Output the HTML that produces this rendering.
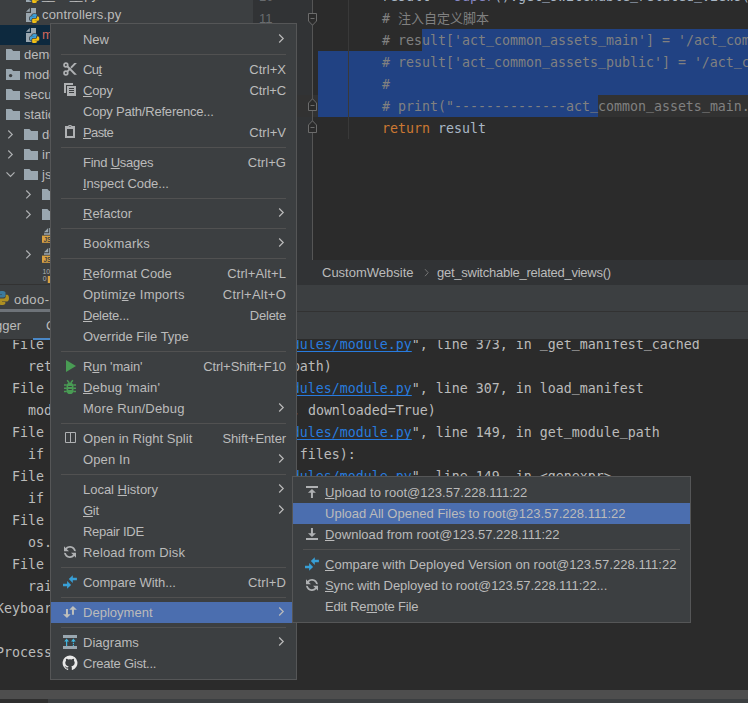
<!DOCTYPE html>
<html><head><meta charset="utf-8"><title>PyCharm</title>
<style>
html,body{margin:0;padding:0}
body{width:748px;height:703px;overflow:hidden;position:relative;background:#2b2b2b;font-family:"Liberation Sans","Noto Sans CJK SC",sans-serif;font-size:13px;color:#bbbbbb}
#root{position:absolute;left:0;top:0;width:748px;height:703px;overflow:hidden}
.abs{position:absolute}
/* tree */
#tree{position:absolute;left:0;top:0;width:253px;height:284px;background:#3c3f41;overflow:hidden}
.tr{position:absolute;left:0;width:253px;height:20px}
.tr.sel{background:#0d293e}
.ti{position:absolute;top:2px}
.tt{position:absolute;top:0;line-height:20px;white-space:nowrap;color:#bbbbbb;font-size:13px}
.tr.red .tt{color:#d1675a}
/* editor */
#gutter{position:absolute;left:253px;top:0;width:59px;height:260px;background:#313335}
#foldline{position:absolute;left:312px;top:0;width:1px;height:260px;background:#555555}
#editor{position:absolute;left:313px;top:0;width:435px;height:260px;background:#2b2b2b;overflow:hidden}
.selr{position:absolute;background:#214283}
.ln{position:absolute;left:382px;height:22px;line-height:22px;white-space:pre;font-family:"DejaVu Sans Mono","Liberation Mono","Noto Sans CJK SC",monospace;font-size:13.29px}
.ln .c{color:#808080} .ln .w{color:#a9b7c6} .ln .k{color:#cc7832} .ln .bi{color:#8888c6}
.ln .zh{font-family:"Liberation Sans","Noto Sans CJK SC",sans-serif;font-size:13px}
.lnum{position:absolute;color:#686b6e;font-size:13px;line-height:22px;font-family:"Liberation Sans",sans-serif}
.fold{position:absolute;left:307px}
#guide{position:absolute;left:348px;top:0;width:1px;height:139px;background:#393939}
#crumbs{position:absolute;left:253px;top:260px;width:495px;height:25px;background:#313335}
#crumbs span{position:absolute;top:0;line-height:25px;font-size:13px;color:#bbbbbb;white-space:nowrap}
/* debug panel */
#dbg{position:absolute;left:0;top:285px;width:748px;height:54px;background:#3c3f41}
#dbgline{position:absolute;left:0;top:311px;width:748px;height:1px;background:#323232}
#treeline{position:absolute;left:0;top:284px;width:748px;height:1px;background:#323232}
/* console */
#console{position:absolute;left:0;top:340px;width:748px;height:350px;background:#2b2b2b;overflow:hidden}
.cl{position:absolute;left:-4px;height:22px;line-height:22px;white-space:pre;font-family:"DejaVu Sans Mono","Liberation Mono",monospace;font-size:13.29px;color:#bbbbbb}
.cl a{color:#287bde;text-decoration:underline;text-decoration-skip-ink:none;text-underline-offset:2px;text-decoration-thickness:1px}
.cl i,.ln i{font-style:normal;position:relative;top:-2px}
/* menus */
.menu{position:absolute;background:#3c3f41;border:1px solid #555657;box-sizing:border-box;padding:5px 0 5px 0}
.mi{position:relative;height:21px;line-height:21px;white-space:nowrap}
.mi.sel{background:#4b6eaf}
.mi .ic{position:absolute;left:11px;top:2px}
.mi .lb{position:absolute;left:32px;top:0;color:#bbbbbb}
.mi .sc{position:absolute;right:10px;top:0;color:#bbbbbb}
.mi .chev{position:absolute;right:11px;top:4px}
.mi u{text-decoration:underline;text-underline-offset:1px;text-decoration-thickness:1px}
.sep{height:1px;margin:4px 10px 4px 10px;background:#515151}
</style></head><body><div id="root">

<div id="tree">
<div class="tr " style="top:-15px"><svg class="ti" style="left:25px" width="16" height="16" viewBox="0 0 16 16"><path d="M1 4.700 L4.800 1 V4.700z" fill="#9aa7b0"/><path d="M6 1h5v7H8v7H1V6h5z" fill="#9aa7b0"/><g transform="translate(4.100,6.350) scale(0.675,0.645)" stroke="#3c3f41" stroke-width="2.200" paint-order="stroke"><path d="M7.900 1c-3.400 0-3.200 1.500-3.200 1.500v1.600h3.300v.5H3.400S1 4.300 1 7.800s2 3.400 2 3.400h1.300V9.500s-.1-2 2-2h3.300s1.900 0 1.900-1.900V2.800S11.800 1 7.900 1z" fill="#3c9ed6"/><path d="M8.100 15c3.400 0 3.200-1.500 3.200-1.500v-1.600H8v-.5h4.600s2.400.3 2.400-3.200-2-3.400-2-3.400h-1.300v1.700s.1 2-2 2H6.400s-1.900 0-1.900 1.900v2.800S4.200 15 8.100 15z" fill="#f2c012"/></g></svg><span class="tt" style="left:42px"><span style="letter-spacing:-1.700px">__</span>init<span style="letter-spacing:-1.700px">__</span>.py</span></div>
<div class="tr " style="top:5px"><svg class="ti" style="left:25px" width="16" height="16" viewBox="0 0 16 16"><path d="M1 4.700 L4.800 1 V4.700z" fill="#9aa7b0"/><path d="M6 1h5v7H8v7H1V6h5z" fill="#9aa7b0"/><g transform="translate(4.100,6.350) scale(0.675,0.645)" stroke="#3c3f41" stroke-width="2.200" paint-order="stroke"><path d="M7.900 1c-3.400 0-3.200 1.500-3.200 1.500v1.600h3.300v.5H3.400S1 4.300 1 7.800s2 3.400 2 3.400h1.300V9.500s-.1-2 2-2h3.300s1.900 0 1.900-1.900V2.800S11.800 1 7.900 1z" fill="#3c9ed6"/><path d="M8.100 15c3.400 0 3.200-1.500 3.200-1.500v-1.600H8v-.5h4.600s2.400.3 2.400-3.200-2-3.400-2-3.400h-1.300v1.700s.1 2-2 2H6.400s-1.900 0-1.900 1.900v2.800S4.200 15 8.100 15z" fill="#f2c012"/></g></svg><span class="tt" style="left:42px;letter-spacing:0.140px">controllers.py</span></div>
<div class="tr red sel" style="top:25px"><svg class="ti" style="left:25px" width="16" height="16" viewBox="0 0 16 16"><path d="M1 4.700 L4.800 1 V4.700z" fill="#9aa7b0"/><path d="M6 1h5v7H8v7H1V6h5z" fill="#9aa7b0"/><g transform="translate(4.100,6.350) scale(0.675,0.645)" stroke="#3c3f41" stroke-width="2.200" paint-order="stroke"><path d="M7.900 1c-3.400 0-3.200 1.500-3.200 1.500v1.600h3.300v.5H3.400S1 4.300 1 7.800s2 3.400 2 3.400h1.300V9.500s-.1-2 2-2h3.300s1.900 0 1.900-1.900V2.800S11.800 1 7.900 1z" fill="#3c9ed6"/><path d="M8.100 15c3.400 0 3.200-1.500 3.200-1.500v-1.600H8v-.5h4.600s2.400.3 2.400-3.200-2-3.400-2-3.400h-1.300v1.700s.1 2-2 2H6.400s-1.900 0-1.900 1.900v2.800S4.200 15 8.100 15z" fill="#f2c012"/></g></svg><span class="tt" style="left:42px">main.py</span></div>
<div class="tr " style="top:45px"><svg class="ti" style="left:5px" width="16" height="16" viewBox="0 0 16 16"><path d="M1 2h5.400l1.800 2H15V13H1z" fill="#9aa7b0"/></svg><span class="tt" style="left:24px">demo</span></div>
<div class="tr " style="top:65px"><svg class="ti" style="left:5px" width="16" height="16" viewBox="0 0 16 16"><path d="M1 2h5.400l1.800 2H15V13H1z" fill="#9aa7b0"/><circle cx="5.600" cy="8.600" r="1.700" fill="#3c3f41"/></svg><span class="tt" style="left:24px">models</span></div>
<div class="tr " style="top:85px"><svg class="ti" style="left:5px" width="16" height="16" viewBox="0 0 16 16"><path d="M1 2h5.400l1.800 2H15V13H1z" fill="#9aa7b0"/></svg><span class="tt" style="left:24px">security</span></div>
<div class="tr " style="top:105px"><svg class="ti" style="left:5px" width="16" height="16" viewBox="0 0 16 16"><path d="M1 2h5.400l1.800 2H15V13H1z" fill="#9aa7b0"/></svg><span class="tt" style="left:24px">static</span></div>
<div class="tr " style="top:125px"><svg class="ti" style="left:2px" width="16" height="16" viewBox="0 0 16 16"><path d="M6.300 3.500 L10.200 7.450 L6.300 11.400" fill="none" stroke="#afb1b3" stroke-width="1.200"/></svg><svg class="ti" style="left:23px" width="16" height="16" viewBox="0 0 16 16"><path d="M1 2h5.400l1.800 2H15V13H1z" fill="#9aa7b0"/></svg><span class="tt" style="left:42px">description</span></div>
<div class="tr " style="top:145px"><svg class="ti" style="left:2px" width="16" height="16" viewBox="0 0 16 16"><path d="M6.300 3.500 L10.200 7.450 L6.300 11.400" fill="none" stroke="#afb1b3" stroke-width="1.200"/></svg><svg class="ti" style="left:23px" width="16" height="16" viewBox="0 0 16 16"><path d="M1 2h5.400l1.800 2H15V13H1z" fill="#9aa7b0"/></svg><span class="tt" style="left:42px">inc</span></div>
<div class="tr " style="top:165px"><svg class="ti" style="left:2px" width="16" height="16" viewBox="0 0 16 16"><path d="M4.500 5.300 L8.500 9.300 L12.500 5.300" fill="none" stroke="#afb1b3" stroke-width="1.200"/></svg><svg class="ti" style="left:23px" width="16" height="16" viewBox="0 0 16 16"><path d="M1 2h5.400l1.800 2H15V13H1z" fill="#9aa7b0"/></svg><span class="tt" style="left:42px">js</span></div>
<div class="tr " style="top:185px"><svg class="ti" style="left:20px" width="16" height="16" viewBox="0 0 16 16"><path d="M6.300 3.500 L10.200 7.450 L6.300 11.400" fill="none" stroke="#afb1b3" stroke-width="1.200"/></svg><svg class="ti" style="left:41px" width="16" height="16" viewBox="0 0 16 16"><path d="M1 2h5.400l1.800 2H15V13H1z" fill="#9aa7b0"/></svg><span class="tt" style="left:62px">lib</span></div>
<div class="tr " style="top:205px"><svg class="ti" style="left:20px" width="16" height="16" viewBox="0 0 16 16"><path d="M6.300 3.500 L10.200 7.450 L6.300 11.400" fill="none" stroke="#afb1b3" stroke-width="1.200"/></svg><svg class="ti" style="left:41px" width="16" height="16" viewBox="0 0 16 16"><path d="M1 2h5.400l1.800 2H15V13H1z" fill="#9aa7b0"/></svg><span class="tt" style="left:62px">src</span></div>
<div class="tr " style="top:225px"><svg class="ti" style="left:41px" width="16" height="16" viewBox="0 0 16 16"><path d="M3 5.200 L7.200 1 V5.200z" fill="#9aa7b0"/><path d="M8.200 1H13V7.800H3V6.200H8.200z" fill="#9aa7b0"/><path d="M1 8.600h15v7.200H1z" fill="#d9a343"/><text x="2.400" y="14.600" font-family="Liberation Sans" font-weight="bold" font-size="6.500" fill="#3c3f41">JS</text></svg><span class="tt" style="left:62px">a.js</span></div>
<div class="tr " style="top:245px"><svg class="ti" style="left:20px" width="16" height="16" viewBox="0 0 16 16"><path d="M6.300 3.500 L10.200 7.450 L6.300 11.400" fill="none" stroke="#afb1b3" stroke-width="1.200"/></svg><svg class="ti" style="left:41px" width="16" height="16" viewBox="0 0 16 16"><path d="M3 5.200 L7.200 1 V5.200z" fill="#9aa7b0"/><path d="M8.200 1H13V7.800H3V6.200H8.200z" fill="#9aa7b0"/><path d="M1 8.600h15v7.200H1z" fill="#d9a343"/><text x="2.400" y="14.600" font-family="Liberation Sans" font-weight="bold" font-size="6.500" fill="#3c3f41">JS</text></svg><span class="tt" style="left:62px">b.js</span></div>
<div class="tr " style="top:265px"><svg class="ti" style="left:41px" width="16" height="16" viewBox="0 0 16 16"><text x="1.600" y="6.800" font-family="Liberation Sans" font-size="6.800" fill="#afb1b3">10</text><text x="1.800" y="14.200" font-family="Liberation Sans" font-size="6.800" fill="#afb1b3">0</text><path d="M6.800 9h9v7h-9z" fill="#d9a343"/></svg><span class="tt" style="left:62px">c.map</span></div>
</div>
<div id="treeline"></div>

<div id="gutter"></div>
<div id="editor"></div>
<div class="abs" style="left:253px;top:95px;width:495px;height:22px;background:#323232"></div>
<div class="selr" style="left:422px;top:29px;width:326px;height:22px"></div>
<div class="selr" style="left:318px;top:51px;width:430px;height:44px"></div>
<div class="selr" style="left:318px;top:95px;width:280px;height:22px"></div>
<div id="foldline"></div>
<div id="guide"></div>
<div class="lnum" style="left:259px;top:-14px">10</div>
<div class="lnum" style="left:259px;top:8px">11</div>
<svg class="fold" style="top:13px" width="11" height="13" viewBox="0 0 11 13"><path d="M1.500 0.500h8v7.500l-4 4.200-4-4.200z" fill="#2b2b2b" stroke="#6c6c6c" stroke-width="1"/><path d="M3.500 5.500h4" stroke="#6c6c6c" stroke-width="1"/></svg>
<svg class="fold" style="top:98px" width="11" height="13" viewBox="0 0 11 13"><path d="M1.500 12.500h8V5l-4-4.200-4 4.200z" fill="#2b2b2b" stroke="#6c6c6c" stroke-width="1"/><path d="M3.500 7.500h4" stroke="#6c6c6c" stroke-width="1"/></svg>
<svg class="fold" style="top:120px" width="11" height="13" viewBox="0 0 11 13"><path d="M1.500 12.500h8V5l-4-4.200-4 4.200z" fill="#2b2b2b" stroke="#6c6c6c" stroke-width="1"/><path d="M3.500 7.500h4" stroke="#6c6c6c" stroke-width="1"/></svg>
<div class="ln" style="top:-14px"><span class="w">result = </span><span class="bi">super</span><span class="w">().get<i>_</i>switchable<i>_</i>related<i>_</i>views(key)</span></div>
<div class="ln" style="top:8px"><span class="c"># <span class="zh">注入自定义脚本</span></span></div>
<div class="ln" style="top:30px"><span class="c"># result['act<i>_</i>common<i>_</i>assets<i>_</i>main'] = '/act<i>_</i>common<i>_</i>assets/static/main.js'</span></div>
<div class="ln" style="top:52px"><span class="c"># result['act<i>_</i>common<i>_</i>assets<i>_</i>public'] = '/act<i>_</i>common<i>_</i>assets/static/public.js'</span></div>
<div class="ln" style="top:74px"><span class="c">#</span></div>
<div class="ln" style="top:96px"><span class="c"># print("--------------act<i>_</i>common<i>_</i>assets<i>_</i>main.js")</span></div>
<div class="ln" style="top:118px"><span class="k">return</span><span class="w"> result</span></div>
<div id="crumbs"><span style="left:69px">CustomWebsite</span><svg style="position:absolute;left:171px;top:8px" width="6" height="10" viewBox="0 0 6 10"><path d="M1 1.200 L4.200 4.700 L1 8.200" fill="none" stroke="#747474" stroke-width="1"/></svg><span style="left:184px;letter-spacing:-0.25px">get_switchable_related_views()</span></div>

<div id="dbg">
<div class="abs" style="left:0;top:26px;width:748px;height:1px;background:#323232"></div>
<span class="abs" style="left:14px;top:5px;line-height:20px;font-size:13px;letter-spacing:0.450px">odoo-15</span>
<div class="abs" style="left:0;top:24px;width:120px;height:3px;background:#6e7379"></div>
<span class="abs" style="left:-36px;top:31px;line-height:20px;font-size:13px">Debugger</span>
<span class="abs" style="left:46px;top:31px;line-height:20px;font-size:13px">Console</span>
<div class="abs" style="left:33px;top:53px;width:90px;height:2px;background:#4a88c7"></div>
</div>
<svg style="position:absolute;left:-6px;top:290px;opacity:0.62" width="16" height="16" viewBox="0 0 16 16"><path d="M7.900 1c-3.400 0-3.200 1.500-3.200 1.500v1.600h3.300v.5H3.400S1 4.300 1 7.800s2 3.400 2 3.400h1.300V9.500s-.1-2 2-2h3.300s1.900 0 1.900-1.900V2.800S11.800 1 7.900 1z" fill="#3c9ed6"/><path d="M8.100 15c3.400 0 3.200-1.500 3.200-1.500v-1.600H8v-.5h4.600s2.400.3 2.400-3.200-2-3.400-2-3.400h-1.300v1.700s.1 2-2 2H6.400s-1.900 0-1.900 1.900v2.800S4.200 15 8.100 15z" fill="#f2c012"/></svg>

<div id="console">
<div class="cl" style="top:-6px">  File "<a>work/odoo-15.0-server/odoo/modules/module.py</a>", line 373, in <i>_</i>get<i>_</i>manifest<i>_</i>cached</div>
<div class="cl" style="top:16px">    return load<i>_</i>manifest(module, mod<i>_</i>path)</div>
<div class="cl" style="top:38px">  File "<a>work/odoo-15.0-server/odoo/modules/module.py</a>", line 307, in load<i>_</i>manifest</div>
<div class="cl" style="top:60px">    mod<i>_</i>path = get<i>_</i>module<i>_</i>path(module, downloaded=True)</div>
<div class="cl" style="top:82px">  File "<a>work/odoo-15.0-server/odoo/modules/module.py</a>", line 149, in get<i>_</i>module<i>_</i>path</div>
<div class="cl" style="top:104px">    if any(os.path.exists(f) for f in files):</div>
<div class="cl" style="top:126px">  File "<a>work/odoo-15.0-server/odoo/modules/module.py</a>", line 149, in &lt;genexpr&gt;</div>
<div class="cl" style="top:148px">    if any(os.path.exists(f) for f in files):</div>
<div class="cl" style="top:170px">  File "<a>/usr/lib/python3.8/genericpath.py</a>", line 19, in exists</div>
<div class="cl" style="top:192px">    os.stat(path)</div>
<div class="cl" style="top:214px">  File "<a>/usr/lib/python3.8/signal.py</a>", line 47, in handler</div>
<div class="cl" style="top:236px">    raise KeyboardInterrupt</div>
<div class="cl" style="top:258px">KeyboardInterrupt</div>
<div class="cl" style="top:280px"></div>
<div class="cl" style="top:302px">Process finished with exit code 1</div>
</div>
<div class="abs" style="left:0;top:690px;width:748px;height:9px;background:#4e4e4e"></div>
<div class="abs" style="left:0;top:699px;width:748px;height:4px;background:#3c3f41"></div>
<div class="abs" style="left:0;top:699px;width:48px;height:4px;background:#2f2f2f"></div>

<div class="menu" style="left:50px;top:23px;width:247px">
<div class="mi"><span class="lb" style="letter-spacing:-0.108px">New</span><svg class="chev" width="7" height="11" viewBox="0 0 7 11"><path d="M1.200 1.500 L5.200 5.500 L1.200 9.500" fill="none" stroke="#bbbbbb" stroke-width="1.200"/></svg></div>
<div class="sep"></div>
<div class="mi"><svg class="ic" width="16" height="16" viewBox="0 0 16 16"><g fill="none" stroke="#afb1b3" stroke-width="1.700"><circle cx="3.900" cy="3.950" r="1.850"/><circle cx="3.900" cy="11.950" r="1.850"/></g><path d="M6.180 11.060 L14.940 2.100 H12.280 L4.820 9.730z" fill="#afb1b3"/><path d="M7.700 5.900 L10 8.250" stroke="#3c3f41" stroke-width="0.800" fill="none"/><path d="M6.180 4.840 L14.940 13.800 H12.280 L4.820 6.170z" fill="#afb1b3"/></svg><span class="lb" style="letter-spacing:-0.617px">Cu<u>t</u></span><span class="sc" style="letter-spacing:0.043px">Ctrl+X</span></div>
<div class="mi"><svg class="ic" width="16" height="16" viewBox="0 0 16 16"><path d="M2 1H11V3H4V11H2z" fill="#afb1b3"/><path d="M5 4h9v10H5z M7 6v1h5V6z M7 8v1h5V8z M7 10v1h5v-1z" fill="#afb1b3" fill-rule="evenodd"/></svg><span class="lb" style="letter-spacing:-0.153px"><u>C</u>opy</span><span class="sc" style="letter-spacing:-0.101px">Ctrl+C</span></div>
<div class="mi"><span class="lb" style="letter-spacing:-0.207px">Copy Path/Reference...</span></div>
<div class="mi"><svg class="ic" width="16" height="16" viewBox="0 0 16 16"><path d="M3 2H6.100 Q6.300 0.900 7.300 0.900 H8.700 Q9.700 0.900 9.900 2 H13 V14 H3z M5 5V12H11V5z M7.300 2.200 V2.900 H8.700 V2.200z" fill="#afb1b3" fill-rule="evenodd"/></svg><span class="lb" style="letter-spacing:-0.612px"><u>P</u>aste</span><span class="sc" style="letter-spacing:0.043px">Ctrl+V</span></div>
<div class="sep"></div>
<div class="mi"><span class="lb" style="letter-spacing:-0.248px">Find <u>U</u>sages</span><span class="sc" style="letter-spacing:0.056px">Ctrl+G</span></div>
<div class="mi"><span class="lb" style="letter-spacing:-0.118px"><u>I</u>nspect Code...</span></div>
<div class="sep"></div>
<div class="mi"><span class="lb" style="letter-spacing:-0.02px"><u>R</u>efactor</span><svg class="chev" width="7" height="11" viewBox="0 0 7 11"><path d="M1.200 1.500 L5.200 5.500 L1.200 9.500" fill="none" stroke="#bbbbbb" stroke-width="1.200"/></svg></div>
<div class="sep"></div>
<div class="mi"><span class="lb" style="letter-spacing:0.209px">Bookmarks</span><svg class="chev" width="7" height="11" viewBox="0 0 7 11"><path d="M1.200 1.500 L5.200 5.500 L1.200 9.500" fill="none" stroke="#bbbbbb" stroke-width="1.200"/></svg></div>
<div class="sep"></div>
<div class="mi"><span class="lb" style="letter-spacing:0.045px"><u>R</u>eformat Code</span><span class="sc" style="letter-spacing:0.099px">Ctrl+Alt+L</span></div>
<div class="mi"><span class="lb" style="letter-spacing:0.21px">Optimi<u>z</u>e Imports</span><span class="sc" style="letter-spacing:0.246px">Ctrl+Alt+O</span></div>
<div class="mi"><span class="lb" style="letter-spacing:-0.253px"><u>D</u>elete...</span><span class="sc" style="letter-spacing:-0.236px">Delete</span></div>
<div class="mi"><span class="lb" style="letter-spacing:-0.01px">Override File Type</span></div>
<div class="sep"></div>
<div class="mi"><svg class="ic" width="16" height="16" viewBox="0 0 16 16"><path d="M4 2 L14 8 L4 14z" fill="#499c54"/></svg><span class="lb" style="letter-spacing:-0.112px">R<u>u</u>n &#x27;main&#x27;</span><span class="sc" style="letter-spacing:-0.071px">Ctrl+Shift+F10</span></div>
<div class="mi"><svg class="ic" width="16" height="16" viewBox="0 0 16 16"><g fill="#499c54"><path d="M4.500 7.300c0-2.200 1.500-3.700 3.500-3.700s3.500 1.500 3.500 3.700v4.100c0 2.200-1.500 3.700-3.500 3.700s-3.500-1.500-3.500-3.700z M6.200 7v1.100h3.600V7z M6.200 10v1.100h3.600V10z" fill-rule="evenodd"/><path d="M2 5.300h2.800v1.400H2zM2 8.550h2.800v1.400H2zM2 11.800h2.800v1.400H2zM11.200 5.300H14v1.400h-2.800zM11.200 8.550H14v1.400h-2.800zM11.200 11.800H14v1.400h-2.800z"/></g><path d="M5.100 1.300 L7.200 3.800 M10.900 1.300 L8.800 3.800" stroke="#499c54" stroke-width="1.500" fill="none"/></svg><span class="lb" style="letter-spacing:0.176px"><u>D</u>ebug &#x27;main&#x27;</span></div>
<div class="mi"><span class="lb" style="letter-spacing:0.185px">More Run/Debug</span><svg class="chev" width="7" height="11" viewBox="0 0 7 11"><path d="M1.200 1.500 L5.200 5.500 L1.200 9.500" fill="none" stroke="#bbbbbb" stroke-width="1.200"/></svg></div>
<div class="sep"></div>
<div class="mi"><svg class="ic" width="16" height="16" viewBox="0 0 16 16"><path d="M3.500 2.500h10v10h-10z M8.500 2.500v10" fill="none" stroke="#afb1b3" stroke-width="1"/></svg><span class="lb" style="letter-spacing:0.05px">Open in Right Split</span><span class="sc" style="letter-spacing:-0.099px">Shift+Enter</span></div>
<div class="mi"><span class="lb" style="letter-spacing:0.122px">Open In</span><svg class="chev" width="7" height="11" viewBox="0 0 7 11"><path d="M1.200 1.500 L5.200 5.500 L1.200 9.500" fill="none" stroke="#bbbbbb" stroke-width="1.200"/></svg></div>
<div class="sep"></div>
<div class="mi"><span class="lb" style="letter-spacing:-0.02px">Local <u>H</u>istory</span><svg class="chev" width="7" height="11" viewBox="0 0 7 11"><path d="M1.200 1.500 L5.200 5.500 L1.200 9.500" fill="none" stroke="#bbbbbb" stroke-width="1.200"/></svg></div>
<div class="mi"><span class="lb" style="letter-spacing:-0.262px"><u>G</u>it</span><svg class="chev" width="7" height="11" viewBox="0 0 7 11"><path d="M1.200 1.500 L5.200 5.500 L1.200 9.500" fill="none" stroke="#bbbbbb" stroke-width="1.200"/></svg></div>
<div class="mi"><span class="lb" style="letter-spacing:-0.275px">Repair IDE</span></div>
<div class="mi"><svg class="ic" width="16" height="16" viewBox="0 0 16 16"><path fill="#afb1b3" fill-rule="evenodd" d="M12.575 11.885C11.474 13.182 9.832 14.004 7.999 14.004 5.039 14.004 2.580 11.862 2.088 9.043L3.948 9.108C4.434 10.890 6.064 12.200 8.000 12.200 9.301 12.200 10.465 11.608 11.235 10.679L9.050 8.712 14.043 8.450 14.305 13.443 12.575 11.885ZM3.428 4.117C4.528 2.825 6.168 2.004 7.999 2.004 10.919 2.004 13.351 4.090 13.888 6.853L12.023 6.788C11.502 5.059 9.898 3.800 8.000 3.800 6.699 3.800 5.535 4.392 4.765 5.321L6.955 7.293 1.962 7.555 1.700 2.562 3.428 4.117Z" transform="rotate(3 8.002 8.004)"/></svg><span class="lb" style="letter-spacing:0.153px">Reload from Disk</span></div>
<div class="sep"></div>
<div class="mi"><svg class="ic" width="16" height="16" viewBox="0 0 16 16"><g fill="#389fd6"><path d="M6.800 5.100 L10.800 1.200 V3.850 H14.900 V6.350 H10.800 V9z"/><path d="M9.100 10.900 L5.100 7 V9.650 H1 V12.150 H5.100 V14.800z"/></g></svg><span class="lb" style="letter-spacing:-0.073px">Compare With...</span><span class="sc" style="letter-spacing:0.139px">Ctrl+D</span></div>
<div class="sep"></div>
<div class="mi sel"><svg class="ic" width="16" height="16" viewBox="0 0 16 16"><g fill="#bfc0bc"><path d="M10.950 2 L14.900 5.700 H11.950 V10.800 H9.950 V5.700 H7.250z"/><path d="M4.970 14.050 L1 10.250 H3.970 V5 H5.970 V10.250 H8.700z"/></g></svg><span class="lb" style="letter-spacing:0.025px">Deployment</span><svg class="chev" width="7" height="11" viewBox="0 0 7 11"><path d="M1.200 1.500 L5.200 5.500 L1.200 9.500" fill="none" stroke="#bbbbbb" stroke-width="1.200"/></svg></div>
<div class="sep"></div>
<div class="mi"><svg class="ic" width="16" height="16" viewBox="0 0 16 16"><path d="M1 1h14v3H1zM1 12h14v3H1z" fill="#9aa7b0"/><g fill="#40b6e0"><path d="M4.6 4.6 L7 7.6 H5.2 V12 H4 V7.6 H2.2z"/><path d="M11.4 4.6 L13.8 7.6 H12 V8.2 H10.8 V7.6 H9z"/><path d="M10.8 9h1.2v1.2h-1.2zM10.8 10.9h1.2V12h-1.2z"/></g></svg><span class="lb" style="letter-spacing:0.025px">Diagrams</span><svg class="chev" width="7" height="11" viewBox="0 0 7 11"><path d="M1.200 1.500 L5.200 5.500 L1.200 9.500" fill="none" stroke="#bbbbbb" stroke-width="1.200"/></svg></div>
<div class="mi"><svg class="ic" width="16" height="16" viewBox="0 0 16 16"><path fill="#e8e8e8" d="M8 .6a7.4 7.4 0 0 0-2.34 14.42c.37.07.5-.16.5-.36v-1.25c-2.06.45-2.5-.99-2.5-.99-.33-.86-.82-1.08-.82-1.08-.67-.46.05-.45.05-.45.74.05 1.13.76 1.13.76.66 1.13 1.73.8 2.15.62.07-.48.26-.8.47-.99-1.64-.19-3.37-.82-3.37-3.66 0-.81.29-1.47.76-1.99-.08-.19-.33-.94.07-1.96 0 0 .62-.2 2.04.76a7.1 7.1 0 0 1 3.7 0c1.41-.96 2.03-.76 2.03-.76.4 1.02.15 1.77.07 1.96.48.52.76 1.18.76 1.99 0 2.85-1.73 3.47-3.38 3.66.27.23.5.68.5 1.37v2.03c0 .2.13.43.51.36A7.4 7.4 0 0 0 8 .6z"/></svg><span class="lb" style="letter-spacing:-0.244px">Create Gist...</span></div>
</div>

<div class="menu" style="left:292px;top:476px;width:399px">
<div class="mi"><svg class="ic" width="16" height="16" viewBox="0 0 16 16"><g fill="#afb1b3"><path d="M2 2h12v2H2z"/><path d="M7.960 5 L11.950 8.800 H8.950 V13.950 H6.960 V8.800 H3.970z"/></g></svg><span class="lb" style="letter-spacing:0.03px"><u>U</u>pload to root@123.57.228.111:22</span></div>
<div class="mi sel"><span class="lb" style="letter-spacing:0.02px">Upload All Opened Files to root@123.57.228.111:22</span></div>
<div class="mi"><svg class="ic" width="16" height="16" viewBox="0 0 16 16"><g fill="#afb1b3"><path d="M2 12h12v2H2z"/><path d="M7.960 10.950 L11.950 7.150 H8.950 V2 H6.960 V7.150 H3.970z"/></g></svg><span class="lb" style="letter-spacing:0.041px"><u>D</u>ownload from root@123.57.228.111:22</span></div>
<div class="sep"></div>
<div class="mi"><svg class="ic" width="16" height="16" viewBox="0 0 16 16"><g fill="#389fd6"><path d="M6.800 5.100 L10.800 1.200 V3.850 H14.900 V6.350 H10.800 V9z"/><path d="M9.100 10.900 L5.100 7 V9.650 H1 V12.150 H5.100 V14.800z"/></g></svg><span class="lb" style="letter-spacing:0.035px"><u>C</u>ompare with Deployed Version on root@123.57.228.111:22</span></div>
<div class="mi"><svg class="ic" width="16" height="16" viewBox="0 0 16 16"><path fill="#afb1b3" fill-rule="evenodd" d="M12.575 11.885C11.474 13.182 9.832 14.004 7.999 14.004 5.039 14.004 2.580 11.862 2.088 9.043L3.948 9.108C4.434 10.890 6.064 12.200 8.000 12.200 9.301 12.200 10.465 11.608 11.235 10.679L9.050 8.712 14.043 8.450 14.305 13.443 12.575 11.885ZM3.428 4.117C4.528 2.825 6.168 2.004 7.999 2.004 10.919 2.004 13.351 4.090 13.888 6.853L12.023 6.788C11.502 5.059 9.898 3.800 8.000 3.800 6.699 3.800 5.535 4.392 4.765 5.321L6.955 7.293 1.962 7.555 1.700 2.562 3.428 4.117Z" transform="rotate(3 8.002 8.004)"/></svg><span class="lb" style="letter-spacing:-0.063px"><u>S</u>ync with Deployed to root@123.57.228.111:22...</span></div>
<div class="mi"><span class="lb" style="letter-spacing:-0.173px">Edit Re<u>m</u>ote File</span></div>
</div>

</div></body></html>
